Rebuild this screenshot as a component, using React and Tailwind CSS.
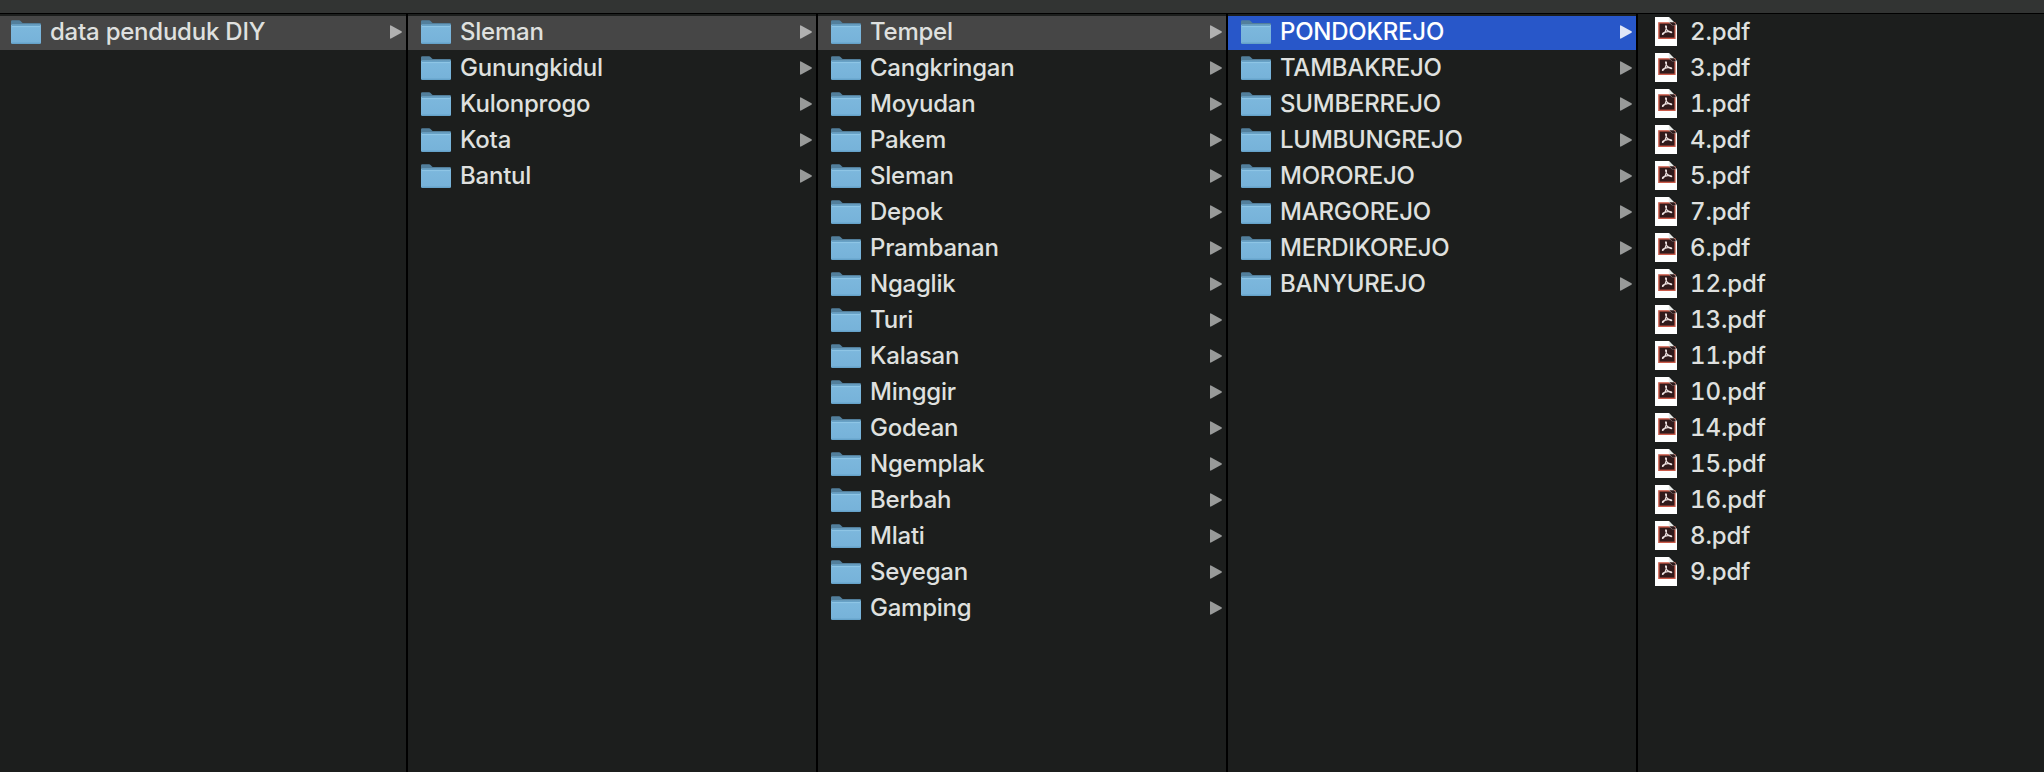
import React from "react";

const columns = [
  { width: "w-[408px]", pad: "pl-[11px]", items: ["data penduduk DIY"] },
  {
    width: "w-[410px]",
    pad: "pl-[13px]",
    items: ["Sleman", "Gunungkidul", "Kulonprogo", "Kota", "Bantul"],
  },
  {
    width: "w-[410px]",
    pad: "pl-[13px]",
    items: [
      "Tempel", "Cangkringan", "Moyudan", "Pakem", "Sleman", "Depok",
      "Prambanan", "Ngaglik", "Turi", "Kalasan", "Minggir", "Godean",
      "Ngemplak", "Berbah", "Mlati", "Seyegan", "Gamping",
    ],
  },
  {
    width: "w-[410px]",
    pad: "pl-[13px]",
    active: true,
    items: [
      "PONDOKREJO", "TAMBAKREJO", "SUMBERREJO", "LUMBUNGREJO",
      "MOROREJO", "MARGOREJO", "MERDIKOREJO", "BANYUREJO",
    ],
  },
];

const files = [2, 3, 1, 4, 5, 7, 6, 12, 13, 11, 10, 14, 15, 16, 8, 9];

function FolderIcon() {
  return (
    <svg width="30" height="24" viewBox="0 0 30 24" className="shrink-0">
      <defs>
        <linearGradient id="folder" x1="0" y1="0" x2="0" y2="1">
          <stop offset="0" stopColor="#7db8dd" />
          <stop offset="1" stopColor="#76b2d9" />
        </linearGradient>
      </defs>
      <path d="M0 6V1.6Q0 .3 1.3 .3H8Q9 .3 9.8 1.2L11 2.4Q11.6 3 12.6 3H28.8Q30 3 30 4.2V8H0Z" fill="#527f9c" />
      <path d="M0 5.4Q0 4.4 1 4.4H29Q30 4.4 30 5.4V22.6Q30 24 28.6 24H1.4Q0 24 0 22.6Z" fill="url(#folder)" />
      <path d="M1 5.6H29" stroke="#5f98bd" strokeWidth=".8" />
      <path d="M1 6.6H29" stroke="#93c8e8" strokeWidth=".9" />
      <path d="M.5 23.2H29.5" stroke="#5f9cc3" strokeWidth="1" />
    </svg>
  );
}

function PdfIcon() {
  return (
    <svg width="22" height="29" viewBox="0 0 22 29" className="shrink-0">
      <path d="M0 0H13.8L22 8.2V29H0Z" fill="#fff" />
      <rect x="3.2" y="5.2" width="17.4" height="16.8" fill="#cb5a49" />
      <rect x="4.6" y="6.6" width="14.8" height="14" fill="#301a1b" />
      <path d="M13.8 0V5.2L17 8.2H22Z" fill="#e9edea" />
      <path d="M14.2 5.2L17.2 8.2H20.6V7L18.8 5.2Z" fill="#301a1b" />
      <path
        d="M10.9 8.9C10.3 8.9 10.8 11.1 11.8 12.6C12.8 14 14.6 15.8 16.4 15.6C17.5 15.2 15.4 14.1 12.6 14.6C10 15 7.5 16.2 7.4 17.2C7.6 18 9.6 16.2 10.6 13.6C11.4 11.8 11.8 8.9 10.9 8.9Z"
        fill="none"
        stroke="#eee3e2"
        strokeWidth="1.2"
      />
    </svg>
  );
}

function Arrow({ color }) {
  return (
    <svg width="12" height="14" viewBox="0 0 12 14" className={`ml-auto shrink-0 ${color}`}>
      <path d="M0 1Q0 0 1 .4L11.5 6.3Q12.2 7 11.5 7.7L1 13.6Q0 14 0 13Z" fill="currentColor" />
    </svg>
  );
}

function FolderRow({ name, selected, active, pad }) {
  const bg = selected ? (active ? "bg-[#2857c9]" : "bg-[#464646]") : "";
  const text = selected && active ? "text-white" : "text-[#dfe0df]";
  const arrow = selected ? (active ? "text-[#e0e6f7]" : "text-[#b0b0b0]") : "text-[#989a99]";
  return (
    <li className={`flex h-[34px] shrink-0 items-center pr-1 pb-0.5 ${pad} ${bg} ${text}`}>
      <FolderIcon />
      <span className="ml-[9px] whitespace-nowrap">{name}</span>
      <Arrow color={arrow} />
    </li>
  );
}

export default function App() {
  return (
    <div className="flex h-[772px] w-[2044px] flex-col overflow-hidden bg-[#1c1e1d] font-['Inter','Liberation_Sans',sans-serif] text-[24px] leading-[32px] font-medium tracking-[-0.23px] text-[#dfe0df]">
      <header className="h-[14px] shrink-0 border-b border-black bg-[#323433]" />
      <main className="flex min-h-0 flex-1">
        {columns.map((col, i) => (
          <ul key={i} className={`flex shrink-0 flex-col gap-0.5 border-r-2 border-black pt-0.5 ${col.width}`}>
            {col.items.map((name, j) => (
              <FolderRow key={name} name={name} selected={j === 0} active={col.active} pad={col.pad} />
            ))}
          </ul>
        ))}
        <ul className="flex flex-1 flex-col gap-0.5 pt-0.5 tracking-[-0.1px] tabular-nums">
          {files.map((n) => (
            <li key={n} className="flex h-[34px] shrink-0 items-center pb-[3px] pl-[17px]">
              <PdfIcon />
              <span className="ml-[13px] pt-px">{n}.pdf</span>
            </li>
          ))}
        </ul>
      </main>
    </div>
  );
}
